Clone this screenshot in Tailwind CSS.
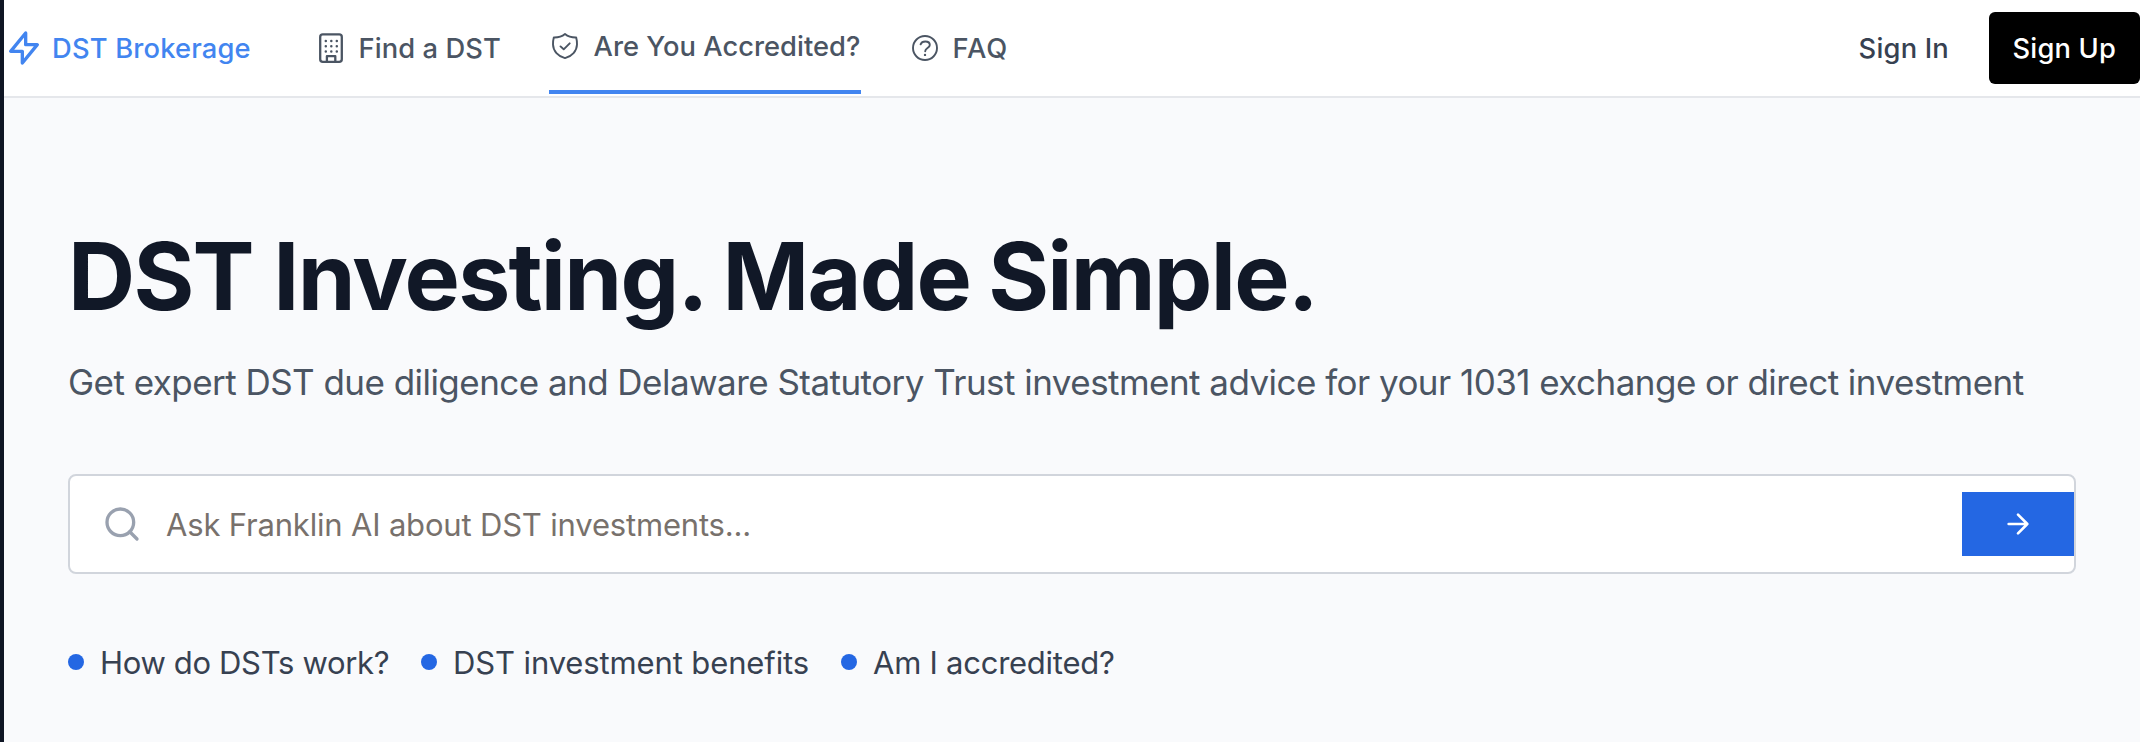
<!DOCTYPE html>
<html lang="en">
<head>
<meta charset="utf-8">
<title>DST Brokerage</title>
<script src="https://cdn.jsdelivr.net/npm/@tailwindcss/browser@4"></script>
</head>
<body class="flex h-[742px] overflow-hidden bg-[#f9fafc] font-['Inter',sans-serif]">
  <div class="w-1 shrink-0 bg-[#0f1624]"></div>
  <div class="flex min-w-0 flex-1 flex-col">
    <header class="flex h-[98px] shrink-0 justify-between border-b-2 border-gray-200 bg-white text-[27.3px] font-medium text-[#4b5563]">
      <nav class="flex whitespace-nowrap">
        <a class="flex w-[313px] items-center text-[#4285f0]">
          <svg class="size-10 shrink-0" viewBox="0 0 24 24" fill="none" stroke="currentColor" stroke-width="2" stroke-linecap="round" stroke-linejoin="round"><path d="M13 10V3L4 14h7v7l9-11h-7z"/></svg>
          <span class="ml-2 pt-[2px] tracking-[0.18px]">DST Brokerage</span>
        </a>
        <a class="flex w-[232px] items-center">
          <svg class="ml-[2px] h-[30px] w-6 shrink-0" viewBox="0 0 24 30" fill="none" stroke="currentColor" stroke-width="2.3" stroke-linejoin="round"><rect x="1.2" y="1.4" width="21.6" height="27.4" rx="2.6"/><path d="M7.9 28.6v-5.4h8.4v5.4"/><path stroke-width="2.5" stroke-linecap="round" d="M6.8 8h.01M12.3 8h.01M17.8 8h.01M6.8 13.3h.01M12.3 13.3h.01M17.8 13.3h.01M6.8 18.6h.01M12.3 18.6h.01M17.8 18.6h.01"/></svg>
          <span class="ml-[15.5px] pt-[2px] tracking-[0.1px]">Find a DST</span>
        </a>
        <a class="flex h-[94px] w-[312px] items-center border-b-4 border-[#4285f0] pt-[2px]">
          <svg class="-mt-px ml-[3px] size-[26px] shrink-0" viewBox="0 0 26 26" fill="none" stroke="currentColor" stroke-width="1.9" stroke-linecap="round" stroke-linejoin="round"><path d="M13 1C10.600 3 6.500 4.600 1.800 4.500C1.100 7 1 9.500 1 11.500C1.200 18 6 23.200 13 25.100C20 23.200 24.800 18 25 11.500C25 9.500 24.900 7 24.200 4.500C19.500 4.600 15.400 3 13 1Z"/><path d="M8.500 13.400l3.200 2.900 6-6"/></svg>
          <span class="ml-[15.500px] pt-[2px] tracking-[0.03px]">Are You Accredited?</span>
        </a>
        <a class="ml-[51px] flex items-center">
          <svg class="size-[26px] shrink-0" viewBox="0 0 26 26" fill="none" stroke="currentColor" stroke-width="1.9" stroke-linecap="round" stroke-linejoin="round"><circle cx="13" cy="13" r="12"/><path d="M8.600 9.300C9.400 7.200 11.200 6.500 13.300 6.500C16 6.500 17.800 7.900 17.800 10C17.800 13 13.200 13.100 13.200 16.200"/><path stroke-width="2.400" d="M13 19.900h.01"/></svg>
          <span class="ml-[14.500px] pt-[2px] tracking-[0.9px]">FAQ</span>
        </a>
      </nav>
      <div class="flex items-center whitespace-nowrap">
        <a class="mr-[40px] pt-[2px] tracking-[0.2px] text-[#374151]">Sign In</a>
        <a class="flex h-[72px] w-[151px] items-center rounded-md bg-black pt-[2px] pl-[23.500px] tracking-[0.2px] text-white">Sign Up</a>
      </div>
    </header>
    <main class="flex flex-col px-16 pt-[130px]">
      <h1 class="text-[93px] leading-[96px] font-bold tracking-[-1.75px] whitespace-nowrap text-[#111827] [word-spacing:-2.4px]">DST <span class="-mr-[2px] ml-[2.500px]">Investing.</span> Made Simple.</h1>
      <p class="mt-[30px] text-[35px] leading-[56px] tracking-[-0.54px] whitespace-nowrap text-[#4b5563]">Get expert DST due diligence and Delaware Statutory Trust investment advice for your 1031 exchange or direct investment</p>
      <div class="mt-[64px] flex h-[100px] items-center rounded-lg border-2 border-gray-300 bg-white">
        <svg class="ml-8 size-10 shrink-0 text-gray-400" viewBox="0 0 24 24" fill="none" stroke="currentColor" stroke-width="2" stroke-linecap="round" stroke-linejoin="round"><circle cx="11" cy="11" r="8"/><path d="m21 21-4.350-4.350"/></svg>
        <span class="ml-6 flex-1 pt-[2px] text-[31px] tracking-[-0.18px] text-[#78716c]">Ask Franklin AI about DST investments...</span>
        <button class="flex h-16 w-28 items-center justify-center bg-[#2467e3] text-white">
          <svg class="size-8" viewBox="0 0 24 24" fill="none" stroke="currentColor" stroke-width="2" stroke-linecap="round" stroke-linejoin="round"><path d="M5 12h14M12 5l7 7-7 7"/></svg>
        </button>
      </div>
      <div class="mt-[64px] flex h-12 items-center text-[31px] whitespace-nowrap text-[#374151]">
        <div class="flex w-[353px] items-center gap-4"><i class="size-4 rounded-full bg-[#2467e3]"></i><span class="pt-[2px] tracking-[-0.34px]">How do DSTs work?</span></div>
        <div class="flex w-[420px] items-center gap-4"><i class="size-4 rounded-full bg-[#2467e3]"></i><span class="pt-[2px] tracking-[-0.12px]">DST investment benefits</span></div>
        <div class="flex items-center gap-4"><i class="size-4 rounded-full bg-[#2467e3]"></i><span class="pt-[2px] tracking-[-0.25px]">Am I accredited?</span></div>
      </div>
    </main>
  </div>
</body>
</html>
